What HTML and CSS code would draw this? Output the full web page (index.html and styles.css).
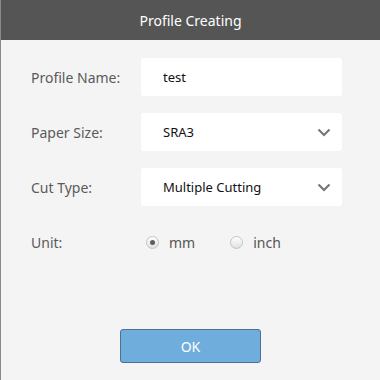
FILE: index.html
```html
<!DOCTYPE html>
<html lang="en">
<head>
  <meta charset="UTF-8" />
  <meta name="viewport" content="width=device-width, initial-scale=1.0"/>
  <title>Profile Creating</title>
  <link rel="stylesheet" href="styles.css">
</head>
<body>
  <!-- Dialog -->
  <div class="dialog">
    <div class="dialog-header">Profile Creating</div>

    <form class="dialog-body">
      <!-- Profile name -->
      <div class="form-row">
        <label for="profileName">Profile Name:</label>
        <div class="field">test</div>
      </div>

      <!-- Paper size -->
      <div class="form-row">
        <label>Paper Size:</label>
        <div class="field select">
          <span>SRA3</span>
          <svg class="chevron" width="14" height="9" viewBox="0 0 14 9"><path d="M1.5 1.5 L7 7 L12.5 1.5" fill="none" stroke="#777" stroke-width="2.2"/></svg>
        </div>
      </div>

      <!-- Cut type -->
      <div class="form-row">
        <label>Cut Type:</label>
        <div class="field select">
          <span>Multiple Cutting</span>
          <svg class="chevron" width="14" height="9" viewBox="0 0 14 9"><path d="M1.5 1.5 L7 7 L12.5 1.5" fill="none" stroke="#777" stroke-width="2.2"/></svg>
        </div>
      </div>

      <!-- Unit -->
      <div class="form-row">
        <label>Unit:</label>
        <div class="radios">
          <span class="radio checked"><span class="dot"></span>mm</span>
          <span class="radio"><span class="dot"></span>inch</span>
        </div>
      </div>
    </form>

    <div class="dialog-footer">
      <button type="button" class="btn-ok">OK</button>
    </div>
  </div>
</body>
</html>
```

FILE: styles.css
```css
/* Page */
body {
  margin: 0;
  font-family: "Noto Sans", "Open Sans", sans-serif;
  font-size: 13px;
}

.dialog {
  width: 379px;
  height: 380px;
  border-left: 1px solid #8a8a8a;
  background: #f4f4f4;
  display: flex;
  flex-direction: column;
}

/* Header */
.dialog-header {
  height: 40px;
  background: #555555;
  color: #ffffff;
  font-size: 14px;
  display: flex;
  align-items: center;
  justify-content: center;
}

/* Form */
.dialog-body {
  flex: 1;
  margin: 0;
  padding: 18px 0 0 30px;
  display: flex;
  flex-direction: column;
  gap: 17px;
}

.form-row {
  display: grid;
  grid-template-columns: 110px 201px;
  align-items: center;
  height: 38px;
}

label {
  color: #5a5a5a;
  font-size: 14px;
}

.field {
  height: 38px;
  box-sizing: border-box;
  background: #ffffff;
  border-radius: 3px;
  padding: 0 11px 0 22px;
  display: flex;
  align-items: center;
  justify-content: space-between;
  color: #111111;
}

.chevron {
  display: block;
}

/* Radio buttons */
.radios {
  display: flex;
  align-items: center;
  gap: 35px;
  padding-left: 5px;
  color: #555555;
  font-size: 14px;
}

.radio {
  display: flex;
  align-items: center;
  gap: 10px;
}

.dot {
  width: 13px;
  height: 13px;
  box-sizing: border-box;
  border: 1px solid #c4c4c4;
  border-radius: 50%;
  background: linear-gradient(#ffffff, #e0e0e0);
  display: flex;
  align-items: center;
  justify-content: center;
}

.radio.checked .dot::after {
  content: '';
  width: 5px;
  height: 5px;
  border-radius: 50%;
  background: #5e5e5e;
}

/* Footer */
.dialog-footer {
  display: flex;
  justify-content: center;
  padding-bottom: 17px;
}

.btn-ok {
  width: 141px;
  height: 34px;
  background: #6faddc;
  border: 1px solid #4d6f96;
  border-radius: 3px;
  color: #ffffff;
  font-family: inherit;
  font-size: 14px;
}
```
